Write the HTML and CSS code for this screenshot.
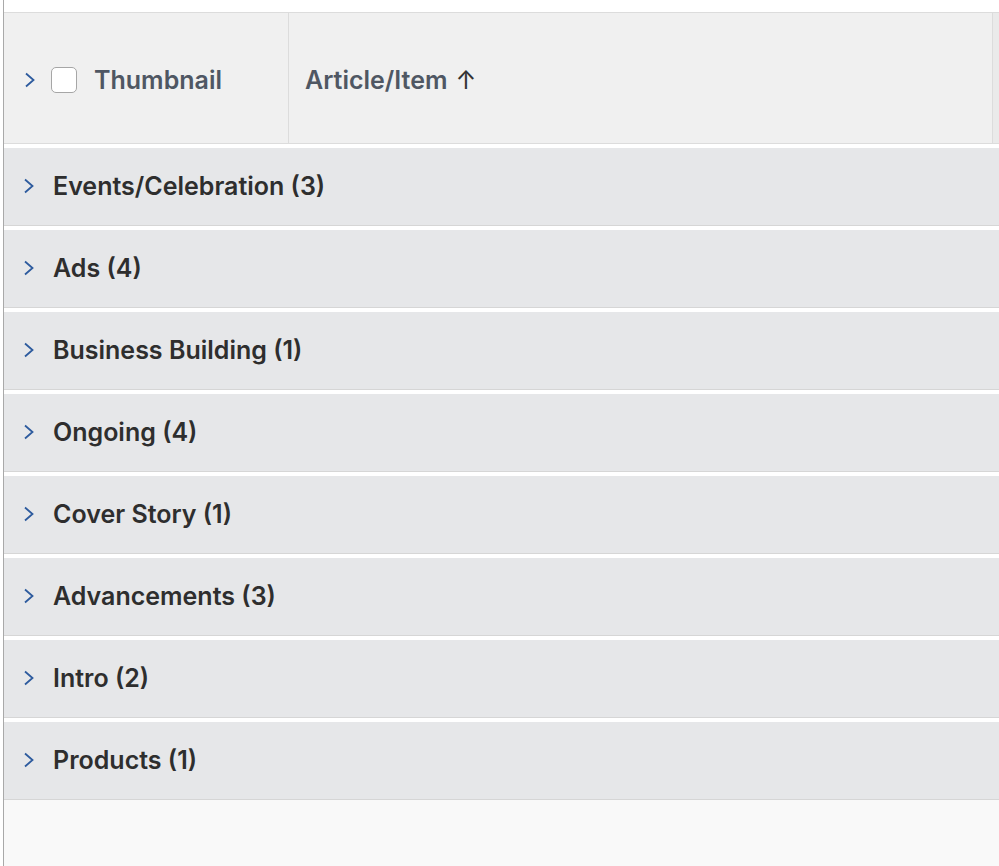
FILE: index.html
```html
<!DOCTYPE html>
<html>

<head>
    <title>Articles</title>
    <link rel="stylesheet" href="styles.css">
</head>

<body>

    <div class="table">
        <div class="head">
            <div class="cell thumb">
                <svg class="chevron" width="12" height="16" viewBox="0 0 12 16"><path d="M2 1.5 L9.5 8 L2 14.5" fill="none" stroke="#2d5b9e" stroke-width="1.8"/></svg>
                <span class="check"></span>
                <span>Thumbnail</span>
            </div>
            <div class="cell article">
                <span>Article/Item</span>
                <span class="arrow">&uarr;</span>
            </div>
            <div class="cell rest"></div>
        </div>

        <div class="group">
            <svg class="chevron" width="12" height="16" viewBox="0 0 12 16"><path d="M2 1.5 L9.5 8 L2 14.5" fill="none" stroke="#2d5b9e" stroke-width="1.8"/></svg>
            <span>Events/Celebration (3)</span>
        </div>
        <div class="group">
            <svg class="chevron" width="12" height="16" viewBox="0 0 12 16"><path d="M2 1.5 L9.5 8 L2 14.5" fill="none" stroke="#2d5b9e" stroke-width="1.8"/></svg>
            <span>Ads (4)</span>
        </div>
        <div class="group">
            <svg class="chevron" width="12" height="16" viewBox="0 0 12 16"><path d="M2 1.5 L9.5 8 L2 14.5" fill="none" stroke="#2d5b9e" stroke-width="1.8"/></svg>
            <span>Business Building (1)</span>
        </div>
        <div class="group">
            <svg class="chevron" width="12" height="16" viewBox="0 0 12 16"><path d="M2 1.5 L9.5 8 L2 14.5" fill="none" stroke="#2d5b9e" stroke-width="1.8"/></svg>
            <span>Ongoing (4)</span>
        </div>
        <div class="group">
            <svg class="chevron" width="12" height="16" viewBox="0 0 12 16"><path d="M2 1.5 L9.5 8 L2 14.5" fill="none" stroke="#2d5b9e" stroke-width="1.8"/></svg>
            <span>Cover Story (1)</span>
        </div>
        <div class="group">
            <svg class="chevron" width="12" height="16" viewBox="0 0 12 16"><path d="M2 1.5 L9.5 8 L2 14.5" fill="none" stroke="#2d5b9e" stroke-width="1.8"/></svg>
            <span>Advancements (3)</span>
        </div>
        <div class="group">
            <svg class="chevron" width="12" height="16" viewBox="0 0 12 16"><path d="M2 1.5 L9.5 8 L2 14.5" fill="none" stroke="#2d5b9e" stroke-width="1.8"/></svg>
            <span>Intro (2)</span>
        </div>
        <div class="group">
            <svg class="chevron" width="12" height="16" viewBox="0 0 12 16"><path d="M2 1.5 L9.5 8 L2 14.5" fill="none" stroke="#2d5b9e" stroke-width="1.8"/></svg>
            <span>Products (1)</span>
        </div>
        <div class="filler"></div>
    </div>

</body>

</html>
```

FILE: styles.css
```css
body {
    margin: 0;
    font-family: Inter, "Liberation Sans", sans-serif;
    background-color: #fff;
}

.table {
    margin-left: 3px;
    padding-top: 12px;
    border-left: 1px solid #a9a9a9;
    min-height: 854px;
    display: flex;
    flex-direction: column;
}

.head {
    display: flex;
    height: 130px;
    background-color: #f0f0f0;
    border-top: 1px solid #dcdcdc;
    border-bottom: 1px solid #dcdcdc;
    margin-bottom: 4px;
}

.cell {
    display: flex;
    align-items: center;
    padding-top: 3px;
    font-size: 25px;
    font-weight: 600;
    color: #4f5763;
}

.thumb {
    width: 284px;
    border-right: 1px solid #dcdcdc;
}

.thumb .chevron {
    margin-left: 20px;
}

.check {
    width: 24px;
    height: 24px;
    margin: 0 17px 0 15px;
    border: 1px solid #a6a6a6;
    border-radius: 5px;
    background-color: #fff;
}

.article {
    flex: 1;
    padding-left: 16px;
    border-right: 1px solid #dcdcdc;
}

.arrow {
    margin-left: 8px;
    font-weight: normal;
    color: #333;
}

.rest {
    width: 6px;
    background-color: #eaeaea;
}

.group {
    display: flex;
    align-items: center;
    height: 75px;
    padding-bottom: 2px;
    margin-bottom: 4px;
    background-color: #e6e7e9;
    border-bottom: 1px solid #d6d6d6;
    font-size: 25px;
    font-weight: 600;
    color: #2e2e2e;
}

.group .chevron {
    margin-left: 19px;
    margin-right: 18px;
}

.filler {
    flex: 1;
    margin-top: -4px;
    background-color: #f9f9f9;
}
```
